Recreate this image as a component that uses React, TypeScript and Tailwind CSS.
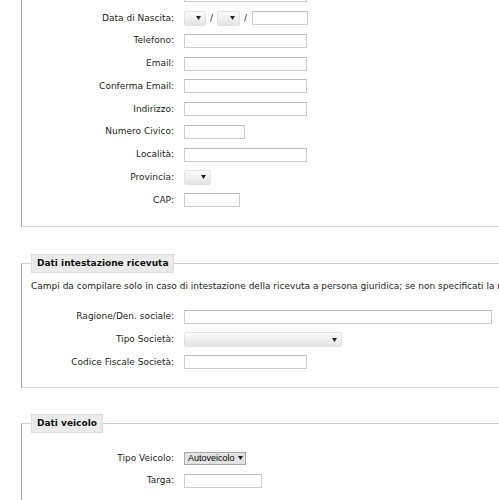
import type { ReactNode } from "react";

const FONT = "font-['DejaVu_Sans',Verdana,sans-serif]";

function Arrow() {
  return (
    <svg width="5" height="4" viewBox="0 0 5 4" className="shrink-0">
      <polygon points="0,0 5,0 2.5,4" fill="#222" />
    </svg>
  );
}

function Input({ w }: { w: string }) {
  return <div className={`h-[14px] border border-[#cdcdcd] border-t-[#bdbdbd] bg-white ${w}`} />;
}

function Select({ w, children }: { w: string; children?: ReactNode }) {
  return (
    <div
      className={`flex h-[15px] items-center justify-end rounded-[2px] border border-[#e2e2e2] bg-gradient-to-b from-[#fbfbfb] to-[#e4e4e4] pr-[4px] ${w}`}
    >
      {children}
      <Arrow />
    </div>
  );
}

function Row({ label, children }: { label: string; children: ReactNode }) {
  return (
    <div className="flex h-[22.75px] items-center">
      <div className="w-[143px] shrink-0 text-right">{label}</div>
      <div className="ml-[10px] flex items-center">{children}</div>
    </div>
  );
}

function Legend({ children }: { children: ReactNode }) {
  return (
    <legend className="h-[19px] border border-[#dcdcdc] bg-[#ebebeb] px-[5px] text-[9px] font-bold leading-[17px] text-[#111]">
      {children}
    </legend>
  );
}

export default function App() {
  return (
    <div className={`h-[500px] w-[499px] overflow-hidden bg-white text-[9px] leading-[13px] text-[#262626] ${FONT}`}>
      {/* dati anagrafici (parte alta tagliata) */}
      <div className="-mt-[16px] ml-[21px] w-[560px] border-b border-l border-b-[#d6d6d6] border-l-[#a6a6a6] pb-[14px] pl-[9px]">
        <Row label="">
          <Input w="w-[123px]" />
        </Row>
        <Row label="Data di Nascita:">
          <Select w="w-[22px]" />
          <span className="mx-[4px]">/</span>
          <Select w="w-[23px]" />
          <span className="ml-[4px] mr-[5px]">/</span>
          <Input w="w-[56px]" />
        </Row>
        <Row label="Telefono:">
          <Input w="w-[123px]" />
        </Row>
        <Row label="Email:">
          <Input w="w-[123px]" />
        </Row>
        <Row label="Conferma Email:">
          <Input w="w-[123px]" />
        </Row>
        <Row label="Indirizzo:">
          <Input w="w-[123px]" />
        </Row>
        <Row label="Numero Civico:">
          <Input w="w-[61px]" />
        </Row>
        <Row label="Località:">
          <Input w="w-[123px]" />
        </Row>
        <Row label="Provincia:">
          <Select w="w-[27px]" />
        </Row>
        <Row label="CAP:">
          <Input w="w-[56px]" />
        </Row>
      </div>

      <fieldset className="ml-[21px] mt-[27px] w-[560px] border-b border-l border-t border-b-[#d6d6d6] border-l-[#a6a6a6] border-t-[#d2d2d2] pb-[13px] pl-[9px]">
        <Legend>Dati intestazione ricevuta</Legend>
        <p className="mt-[7px] whitespace-nowrap">
          Campi da compilare solo in caso di intestazione della ricevuta a persona giuridica; se non specificati la ricevuta sarà intestata al conducente.
        </p>
        <div className="mt-[13px]">
          <Row label="Ragione/Den. sociale:">
            <Input w="w-[308px]" />
          </Row>
          <Row label="Tipo Società:">
            <Select w="w-[158px]" />
          </Row>
          <Row label="Codice Fiscale Società:">
            <Input w="w-[123px]" />
          </Row>
        </div>
      </fieldset>

      <fieldset className="ml-[21px] mt-[26px] w-[560px] border-l border-t border-l-[#a6a6a6] border-t-[#d2d2d2] pb-[20px] pl-[9px]">
        <Legend>Dati veicolo</Legend>
        <div className="mt-[14px]">
          <Row label="Tipo Veicolo:">
            <div className="flex h-[13px] w-[62px] items-center gap-[3px] border border-[#a9a9a9] bg-[#e3e3e3] pl-[3px] font-['Liberation_Sans',Arial,sans-serif] text-[9px] leading-[11px] text-black">
              <span>Autoveicolo</span>
              <Arrow />
            </div>
          </Row>
          <Row label="Targa:">
            <Input w="w-[78px]" />
          </Row>
        </div>
      </fieldset>
    </div>
  );
}
